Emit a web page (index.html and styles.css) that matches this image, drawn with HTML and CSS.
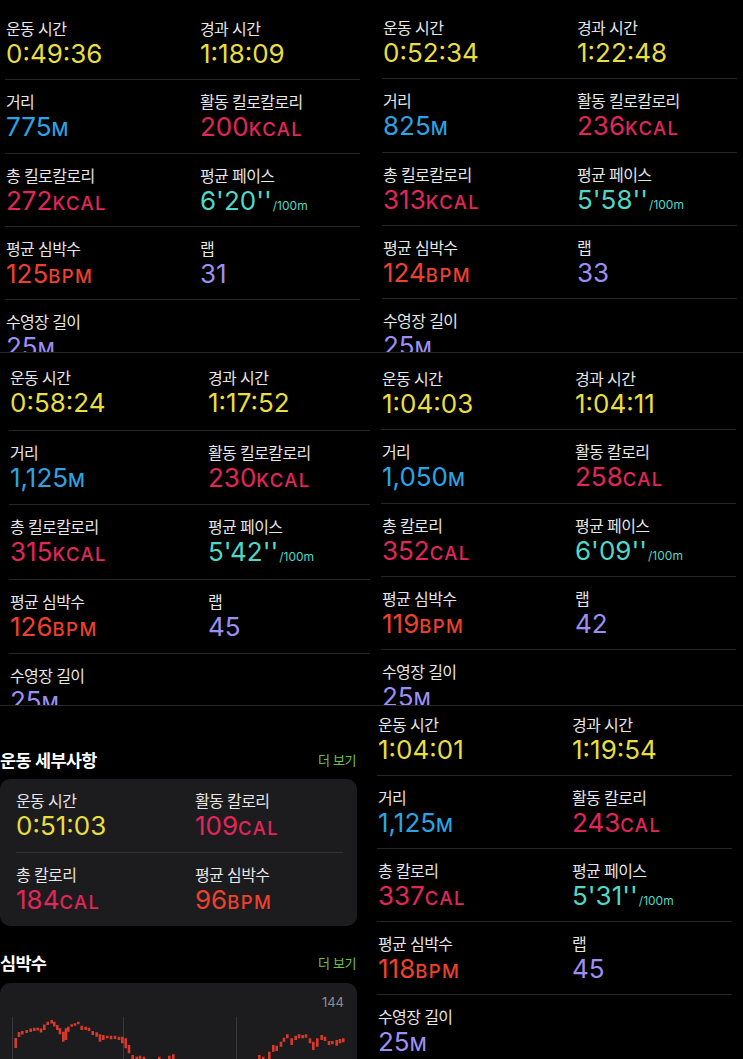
FILE: index.html
```html
<!DOCTYPE html>
<html lang="ko">
<head>
    <meta charset="UTF-8">
    <meta name="viewport" content="width=device-width, initial-scale=1.0">
    <title>수영 기록</title>
    <link rel="stylesheet" href="styles.css">
</head>
<body>
    <div class="collage">

        <div class="strip strip-top">
            <section class="shot shot-a">
                <div class="stats">
                    <div class="stat-row">
                        <div class="stat"><div class="label">운동 시간</div><div class="value time">0:49:36</div></div>
                        <div class="stat"><div class="label">경과 시간</div><div class="value time">1:18:09</div></div>
                    </div>
                    <div class="stat-row">
                        <div class="stat"><div class="label">거리</div><div class="value dist">775<span class="unit">M</span></div></div>
                        <div class="stat"><div class="label">활동 킬로칼로리</div><div class="value kcal">200<span class="unit">KCAL</span></div></div>
                    </div>
                    <div class="stat-row">
                        <div class="stat"><div class="label">총 킬로칼로리</div><div class="value kcal">272<span class="unit">KCAL</span></div></div>
                        <div class="stat"><div class="label">평균 페이스</div><div class="value pace">6'20''<span class="per">/100m</span></div></div>
                    </div>
                    <div class="stat-row">
                        <div class="stat"><div class="label">평균 심박수</div><div class="value bpm">125<span class="unit">BPM</span></div></div>
                        <div class="stat"><div class="label">랩</div><div class="value laps">31</div></div>
                    </div>
                    <div class="stat-row">
                        <div class="stat"><div class="label">수영장 길이</div><div class="value laps">25<span class="unit">M</span></div></div>
                    </div>
                </div>
            </section>

            <section class="shot shot-b">
                <div class="stats">
                    <div class="stat-row">
                        <div class="stat"><div class="label">운동 시간</div><div class="value time">0:52:34</div></div>
                        <div class="stat"><div class="label">경과 시간</div><div class="value time">1:22:48</div></div>
                    </div>
                    <div class="stat-row">
                        <div class="stat"><div class="label">거리</div><div class="value dist">825<span class="unit">M</span></div></div>
                        <div class="stat"><div class="label">활동 킬로칼로리</div><div class="value kcal">236<span class="unit">KCAL</span></div></div>
                    </div>
                    <div class="stat-row">
                        <div class="stat"><div class="label">총 킬로칼로리</div><div class="value kcal">313<span class="unit">KCAL</span></div></div>
                        <div class="stat"><div class="label">평균 페이스</div><div class="value pace">5'58''<span class="per">/100m</span></div></div>
                    </div>
                    <div class="stat-row">
                        <div class="stat"><div class="label">평균 심박수</div><div class="value bpm">124<span class="unit">BPM</span></div></div>
                        <div class="stat"><div class="label">랩</div><div class="value laps">33</div></div>
                    </div>
                    <div class="stat-row">
                        <div class="stat"><div class="label">수영장 길이</div><div class="value laps">25<span class="unit">M</span></div></div>
                    </div>
                </div>
            </section>
        </div>

        <div class="strip strip-mid">
            <section class="shot shot-c">
                <div class="stats">
                    <div class="stat-row">
                        <div class="stat"><div class="label">운동 시간</div><div class="value time">0:58:24</div></div>
                        <div class="stat"><div class="label">경과 시간</div><div class="value time">1:17:52</div></div>
                    </div>
                    <div class="stat-row">
                        <div class="stat"><div class="label">거리</div><div class="value dist">1,125<span class="unit">M</span></div></div>
                        <div class="stat"><div class="label">활동 킬로칼로리</div><div class="value kcal">230<span class="unit">KCAL</span></div></div>
                    </div>
                    <div class="stat-row">
                        <div class="stat"><div class="label">총 킬로칼로리</div><div class="value kcal">315<span class="unit">KCAL</span></div></div>
                        <div class="stat"><div class="label">평균 페이스</div><div class="value pace">5'42''<span class="per">/100m</span></div></div>
                    </div>
                    <div class="stat-row">
                        <div class="stat"><div class="label">평균 심박수</div><div class="value bpm">126<span class="unit">BPM</span></div></div>
                        <div class="stat"><div class="label">랩</div><div class="value laps">45</div></div>
                    </div>
                    <div class="stat-row">
                        <div class="stat"><div class="label">수영장 길이</div><div class="value laps">25<span class="unit">M</span></div></div>
                    </div>
                </div>
            </section>

            <section class="shot shot-d">
                <div class="stats">
                    <div class="stat-row">
                        <div class="stat"><div class="label">운동 시간</div><div class="value time">1:04:03</div></div>
                        <div class="stat"><div class="label">경과 시간</div><div class="value time">1:04:11</div></div>
                    </div>
                    <div class="stat-row">
                        <div class="stat"><div class="label">거리</div><div class="value dist">1,050<span class="unit">M</span></div></div>
                        <div class="stat"><div class="label">활동 칼로리</div><div class="value kcal">258<span class="unit">CAL</span></div></div>
                    </div>
                    <div class="stat-row">
                        <div class="stat"><div class="label">총 칼로리</div><div class="value kcal">352<span class="unit">CAL</span></div></div>
                        <div class="stat"><div class="label">평균 페이스</div><div class="value pace">6'09''<span class="per">/100m</span></div></div>
                    </div>
                    <div class="stat-row">
                        <div class="stat"><div class="label">평균 심박수</div><div class="value bpm">119<span class="unit">BPM</span></div></div>
                        <div class="stat"><div class="label">랩</div><div class="value laps">42</div></div>
                    </div>
                    <div class="stat-row">
                        <div class="stat"><div class="label">수영장 길이</div><div class="value laps">25<span class="unit">M</span></div></div>
                    </div>
                </div>
            </section>
        </div>

        <div class="strip strip-bottom">
            <section class="shot shot-f">
                <div class="section-head">
                    <h2 class="section-title">운동 세부사항</h2>
                    <span class="more">더 보기</span>
                </div>
                <div class="card">
                    <div class="stat-row">
                        <div class="stat"><div class="label">운동 시간</div><div class="value time">0:51:03</div></div>
                        <div class="stat"><div class="label">활동 칼로리</div><div class="value kcal">109<span class="unit">CAL</span></div></div>
                    </div>
                    <div class="stat-row">
                        <div class="stat"><div class="label">총 칼로리</div><div class="value kcal">184<span class="unit">CAL</span></div></div>
                        <div class="stat"><div class="label">평균 심박수</div><div class="value bpm">96<span class="unit">BPM</span></div></div>
                    </div>
                </div>

                <div class="section-head section-head-hr">
                    <h2 class="section-title">심박수</h2>
                    <span class="more">더 보기</span>
                </div>
                <div class="card chart-card">
                    <div class="chart-max">144</div>
                    <svg class="hr-chart" width="357" height="49" viewBox="0 1010 357 49">
                        <path class="grid" d="M12.5 1017V1059M123.5 1017V1059M236.5 1017V1059"/>
                        <path class="bars" d="M15.7 1038V1048M19 1032V1037M22.3 1031V1034.5M26.7 1030V1033M30.7 1028.5V1032M34.3 1027.7V1031M37.7 1027.7V1030.5M41 1028.5V1032.5M44.3 1024.5V1030M47.7 1021.7V1025M51.7 1020V1023.5M54.3 1021.7V1026.5M57.3 1025V1030M60 1028.3V1034.3M63.3 1031.7V1041.7M66 1028.3V1040M68.3 1026.7V1031.7M71.7 1024.3V1026.7M75 1023.3V1025.7M78.3 1021.7V1024.3M81.7 1025.7V1030M85.7 1026.7V1030M89 1027.7V1031M92.7 1031V1035M96.7 1032.3V1036.7M100 1034.3V1041.7M103.3 1035V1040M107.3 1035.7V1038.3M111 1035.7V1039.3M115 1035.7V1039M119 1036.7V1040M122.3 1036.7V1043.3M125.7 1038.3V1048.3M129 1045V1053.3M132.7 1055V1059M136.7 1056.7V1059M140 1055.7V1059M144 1056.7V1059M159.3 1056.7V1059M169.3 1055.7V1059M173.3 1054.3V1059M259.3 1055V1059M263.3 1056.7V1059M269.3 1051.7V1059M273.3 1045V1051.7M276.7 1045.7V1051M281 1041.7V1046.7M284 1037.7V1041.7M287.3 1034.3V1038.3M291.7 1038.3V1045M295.7 1035.7V1040M299 1034.3V1038.3M302.7 1035V1038.3M306 1034.3V1037.7M310 1038.3V1043.3M313.3 1041.7V1050M317.3 1038.3V1046.7M321.7 1035V1040M325 1036.7V1041M329 1041V1045M332.3 1041V1044.3M336.7 1040V1045.7M340 1039V1043.3M343.3 1038.3V1042.3"/>
                    </svg>
                </div>
            </section>

            <section class="shot shot-e">
                <div class="stats">
                    <div class="stat-row">
                        <div class="stat"><div class="label">운동 시간</div><div class="value time">1:04:01</div></div>
                        <div class="stat"><div class="label">경과 시간</div><div class="value time">1:19:54</div></div>
                    </div>
                    <div class="stat-row">
                        <div class="stat"><div class="label">거리</div><div class="value dist">1,125<span class="unit">M</span></div></div>
                        <div class="stat"><div class="label">활동 칼로리</div><div class="value kcal">243<span class="unit">CAL</span></div></div>
                    </div>
                    <div class="stat-row">
                        <div class="stat"><div class="label">총 칼로리</div><div class="value kcal">337<span class="unit">CAL</span></div></div>
                        <div class="stat"><div class="label">평균 페이스</div><div class="value pace">5'31''<span class="per">/100m</span></div></div>
                    </div>
                    <div class="stat-row">
                        <div class="stat"><div class="label">평균 심박수</div><div class="value bpm">118<span class="unit">BPM</span></div></div>
                        <div class="stat"><div class="label">랩</div><div class="value laps">45</div></div>
                    </div>
                    <div class="stat-row">
                        <div class="stat"><div class="label">수영장 길이</div><div class="value laps">25<span class="unit">M</span></div></div>
                    </div>
                </div>
            </section>
        </div>

    </div>
</body>
</html>
```

FILE: styles.css
```css
* {
    box-sizing: border-box;
}
body {
    margin: 0;
    background: #000;
    color: #e6e6e6;
    font-family: "Noto Sans CJK KR", "Noto Sans", sans-serif;
}
.collage {
    width: 743px;
    height: 1059px;
    overflow: hidden;
}
.strip {
    display: flex;
    border-top: 1px solid #262626;
}
.strip-top {
    height: 352px;
    border-top: 0;
}
.strip-mid {
    height: 353px;
}
.strip-bottom {
    height: 354px;
}
.shot {
    height: 100%;
    overflow: hidden;
}

/* per-screenshot geometry */
.shot-a { width: 362px; --top: 7px; --left: 5px; --right: 2px; --col: 194px; --pitch: 73.3px; }
.shot-b { width: 381px; --top: 6px; --left: 20px; --right: 6px; --col: 194px; --pitch: 73.3px; }
.shot-c { width: 372px; --top: 3px; --left: 9px; --right: 2px; --col: 198px; --pitch: 74.5px; }
.shot-d { width: 371px; --top: 4px; --left: 9px; --right: 7px; --col: 193px; --pitch: 73.3px; }
.shot-e { width: 378px; --top: -3px; --left: 12px; --right: 11px; --col: 194px; --pitch: 73.1px; }
.shot-f { width: 365px; padding: 41px 8px 0 0; }

.stats {
    margin: var(--top) var(--right) 0 var(--left);
}
.stat-row {
    display: grid;
    grid-template-columns: var(--col) 1fr;
    height: var(--pitch);
    padding-top: 11px;
    border-bottom: 1px solid #262626;
}
.stat {
    padding-left: 1px;
}
.label {
    font-size: 16px;
    line-height: 20px;
    letter-spacing: -0.6px;
    white-space: nowrap;
}
.value {
    font-family: Inter, "Liberation Sans", sans-serif;
    font-size: 26px;
    line-height: 32px;
    white-space: nowrap;
}
.unit {
    font-size: 18.5px;
    font-weight: 500;
    letter-spacing: 1.4px;
}
.per {
    font-size: 12px;
    margin-left: 1px;
}
.time { color: #e8de3e; }
.dist { color: #2ba4e4; }
.kcal { color: #e2265a; }
.pace { color: #4fd8c6; }
.bpm { color: #ef402d; }
.laps { color: #9d8ef3; }

/* summary screenshot */
.section-head {
    display: flex;
    justify-content: space-between;
    align-items: center;
    height: 24px;
}
.section-head-hr {
    margin-top: 24px;
}
.section-title {
    margin: 0;
    font-size: 17.5px;
    font-weight: 700;
    letter-spacing: -0.7px;
    color: #fff;
}
.more {
    font-size: 13px;
    letter-spacing: -0.4px;
    color: #6fc03e;
    margin-right: 1px;
}
.card {
    margin-top: 8px;
    padding: 0 14px 0 16px;
    background: #1c1c1e;
    border-radius: 10px;
}
.card .stat-row {
    grid-template-columns: 179px 1fr;
    height: 73.5px;
    border-bottom-color: #333335;
}
.card .stat-row:last-child {
    border-bottom: 0;
}
.card .stat {
    padding-left: 0;
}
.chart-card {
    margin-top: 9px;
    height: 110px;
    padding: 11px 0 0;
}
.chart-max {
    text-align: right;
    padding-right: 13px;
    font-family: Inter, "Liberation Sans", sans-serif;
    font-size: 13px;
    line-height: 16px;
    color: #8e8e93;
}
.hr-chart {
    display: block;
}
.hr-chart .grid {
    stroke: #3a3a3c;
    stroke-width: 1;
    fill: none;
}
.hr-chart .bars {
    stroke: #d7392b;
    stroke-width: 2.6;
    fill: none;
}
```
